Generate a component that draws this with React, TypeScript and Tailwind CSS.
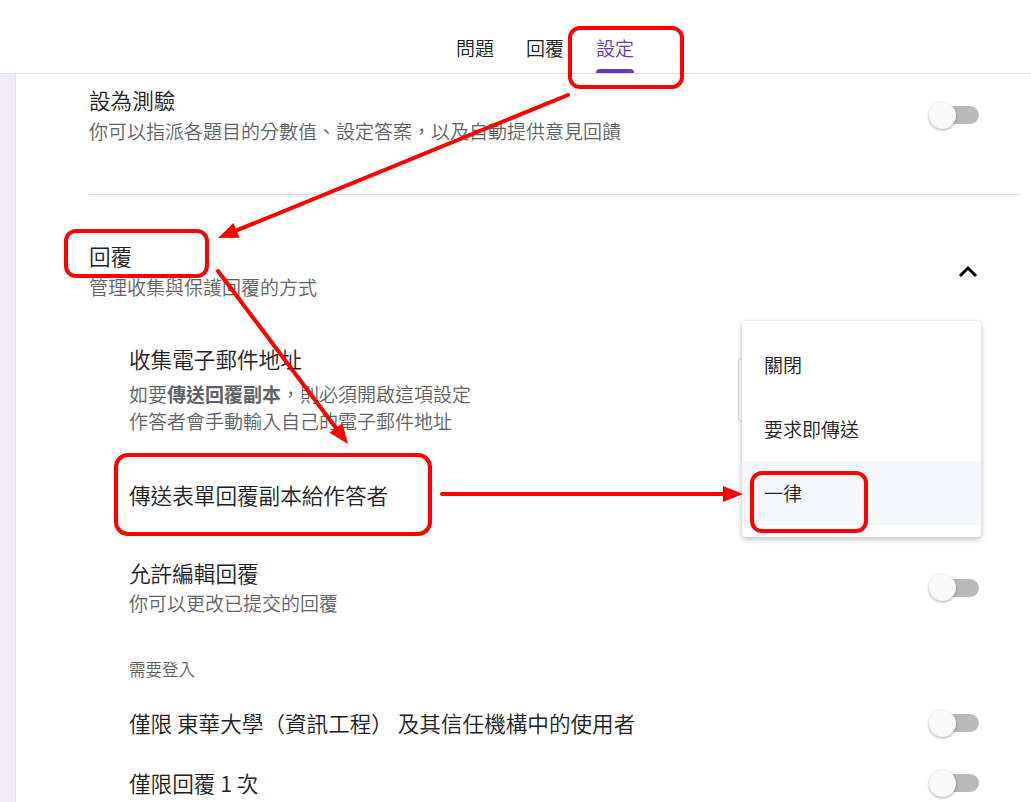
import React from "react";

const FONT = { fontFamily: '"Noto Sans CJK TC", "Noto Sans", Roboto, sans-serif' };

function Toggle() {
  return (
    <div className="relative w-[50px] h-[27px] shrink-0">
      <div className="absolute left-[5px] right-0 top-[4.5px] h-[18px] rounded-full bg-[#b9b9b9]" />
      <div className="absolute left-0 top-0 w-[27px] h-[27px] rounded-full bg-[#fafafa] shadow-[0_1px_3px_rgba(0,0,0,0.35)]" />
    </div>
  );
}

function arrowHead(x1: number, y1: number, x2: number, y2: number, len = 20, half = 8) {
  const dx = x2 - x1;
  const dy = y2 - y1;
  const d = Math.hypot(dx, dy);
  const ux = dx / d;
  const uy = dy / d;
  const bx = x2 - ux * len;
  const by = y2 - uy * len;
  const px = -uy * half;
  const py = ux * half;
  return `${x2},${y2} ${bx + px},${by + py} ${bx - px},${by - py}`;
}

function Arrow({ x1, y1, x2, y2 }: { x1: number; y1: number; x2: number; y2: number }) {
  const dx = x2 - x1;
  const dy = y2 - y1;
  const d = Math.hypot(dx, dy);
  const ex = x2 - (dx / d) * 14;
  const ey = y2 - (dy / d) * 14;
  return (
    <g>
      <line x1={x1} y1={y1} x2={ex} y2={ey} stroke="#ff0000" strokeWidth={4} strokeLinecap="round" />
      <polygon points={arrowHead(x1, y1, x2, y2)} fill="#ff0000" />
    </g>
  );
}

export default function App() {
  return (
    <div className="relative w-full h-[802px] overflow-hidden bg-white text-[#202124] font-[350]" style={FONT}>
      {/* Header */}
      <div className="h-[74px] border-b border-[#dadce0] flex justify-center pl-[59px]">
        <div className="flex gap-[4px]">
          {[
            { t: "問題", active: false },
            { t: "回覆", active: false },
            { t: "設定", active: true },
          ].map((tab) => (
            <div key={tab.t} className="h-[73px] flex flex-col px-[14px]">
              <div
                className={
                  "pt-[35px] text-[19px] leading-[26px] " +
                  (tab.active ? "text-[#673ab7]" : "text-[#202124]")
                }
              >
                {tab.t}
              </div>
              <div className="flex-1" />
              <div
                className={
                  "h-[4px] rounded-t-[4px] " + (tab.active ? "bg-[#673ab7]" : "bg-transparent")
                }
              />
            </div>
          ))}
        </div>
      </div>

      {/* Body */}
      <div className="flex h-[728px]">
        <div className="w-[16px] bg-[#f0ebf8] border-r border-[#e4e0ec] shrink-0" />
        <div className="flex-1 pl-[73px] pr-[11px]">
          {/* Section 1 */}
          <div className="pt-[12px] pb-[50px] border-b border-[#e0e0e0] flex items-center justify-between">
            <div>
              <div className="text-[21.6px] leading-[28px]">設為測驗</div>
              <div className="mt-[4px] text-[19px] leading-[26px] text-[#5f6368]">
                你可以指派各題目的分數值、設定答案，以及自動提供意見回饋
              </div>
            </div>
            <div className="mr-[41px]">
              <Toggle />
            </div>
          </div>

          {/* Section 2 */}
          <div className="pt-[47px]">
            <div className="flex items-center justify-between">
              <div>
                <div className="text-[21.6px] leading-[28px]">回覆</div>
                <div className="mt-[4px] text-[19px] leading-[26px] text-[#5f6368]">
                  管理收集與保護回覆的方式
                </div>
              </div>
              <div className="mr-[36px] w-[32px] h-[32px] flex items-center justify-center">
                <svg width="32" height="32" viewBox="0 0 32 32">
                  <path d="M9 20 L16 13 L23 20" fill="none" stroke="#000" strokeWidth="3" strokeLinecap="square" />
                </svg>
              </div>
            </div>

            <div className="pl-[40px]">
              {/* 收集電子郵件地址 */}
              <div className="mt-[45px] flex items-center justify-between">
                <div>
                  <div className="text-[21.6px] leading-[28px]">收集電子郵件地址</div>
                  <div className="mt-[7px] text-[19px] leading-[27px] text-[#5f6368]">
                    如要<span className="font-bold">傳送回覆副本</span>，則必須開啟這項設定
                  </div>
                  <div className="text-[19px] leading-[27px] text-[#5f6368]">
                    作答者會手動輸入自己的電子郵件地址
                  </div>
                </div>
                <div className="w-[242px] h-[64px] border border-[#dadce0] rounded-[4px] mr-[40px]" />
              </div>

              {/* 傳送表單回覆副本給作答者 */}
              <div className="mt-[47px] text-[21.6px] leading-[28px]">傳送表單回覆副本給作答者</div>

              {/* 允許編輯回覆 */}
              <div className="mt-[50px] flex items-center justify-between">
                <div>
                  <div className="text-[21.6px] leading-[28px]">允許編輯回覆</div>
                  <div className="mt-[3px] text-[19px] leading-[26px] text-[#5f6368]">
                    你可以更改已提交的回覆
                  </div>
                </div>
                <div className="mr-[41px]">
                  <Toggle />
                </div>
              </div>

              <div className="mt-[42px] text-[16.5px] leading-[22px] text-[#5f6368]">需要登入</div>

              <div className="mt-[29px] flex items-center justify-between">
                <div className="text-[21.6px] leading-[28px]">
                  僅限 東華大學（資訊工程） 及其信任機構中的使用者
                </div>
                <div className="mr-[41px]">
                  <Toggle />
                </div>
              </div>

              <div className="mt-[32px] flex items-center justify-between">
                <div className="text-[21.6px] leading-[28px]">僅限回覆 1 次</div>
                <div className="mr-[41px]">
                  <Toggle />
                </div>
              </div>
            </div>
          </div>
        </div>
      </div>

      {/* Dropdown menu */}
      <div className="absolute left-[742px] top-[321px] w-[239px] py-[12px] bg-white rounded-[4px] shadow-[0_2px_6px_rgba(0,0,0,0.28)]">
        <div className="h-[64px] flex items-center pl-[22px] text-[19px] text-[#202124]">關閉</div>
        <div className="h-[64px] flex items-center pl-[22px] text-[19px] text-[#202124]">要求即傳送</div>
        <div className="h-[64px] flex items-center pl-[22px] text-[19px] text-[#202124] bg-[#f4f7fb]">一律</div>
      </div>

      {/* Red annotations */}
      <svg className="absolute inset-0 pointer-events-none" width="1031" height="802" viewBox="0 0 1031 802">
        <rect x="570" y="28" width="112" height="59" rx="10" fill="none" stroke="#ff0000" strokeWidth="4" />
        <rect x="66" y="231" width="141" height="45" rx="10" fill="none" stroke="#ff0000" strokeWidth="4" />
        <rect x="116" y="455" width="314" height="79" rx="12" fill="none" stroke="#ff0000" strokeWidth="4" />
        <rect x="752" y="473" width="114" height="58" rx="10" fill="none" stroke="#ff0000" strokeWidth="4" />
        <Arrow x1={568} y1={95} x2={218} y2={238} />
        <Arrow x1={218} y1={271} x2={348} y2={444} />
        <Arrow x1={442} y1={494} x2={743} y2={494} />
      </svg>
    </div>
  );
}
